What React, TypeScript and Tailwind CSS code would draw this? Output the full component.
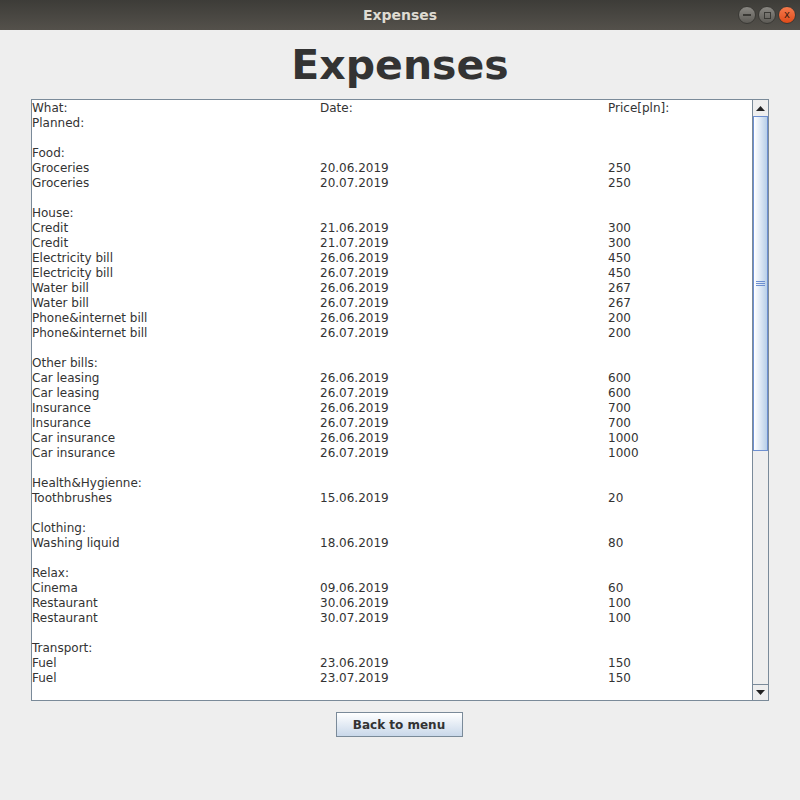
const rows: [string, string, string][] = [
  ['What:', 'Date:', 'Price[pln]:'],
  ['Planned:', '', ''],
  ['', '', ''],
  ['Food:', '', ''],
  ['Groceries', '20.06.2019', '250'],
  ['Groceries', '20.07.2019', '250'],
  ['', '', ''],
  ['House:', '', ''],
  ['Credit', '21.06.2019', '300'],
  ['Credit', '21.07.2019', '300'],
  ['Electricity bill', '26.06.2019', '450'],
  ['Electricity bill', '26.07.2019', '450'],
  ['Water bill', '26.06.2019', '267'],
  ['Water bill', '26.07.2019', '267'],
  ['Phone&internet bill', '26.06.2019', '200'],
  ['Phone&internet bill', '26.07.2019', '200'],
  ['', '', ''],
  ['Other bills:', '', ''],
  ['Car leasing', '26.06.2019', '600'],
  ['Car leasing', '26.07.2019', '600'],
  ['Insurance', '26.06.2019', '700'],
  ['Insurance', '26.07.2019', '700'],
  ['Car insurance', '26.06.2019', '1000'],
  ['Car insurance', '26.07.2019', '1000'],
  ['', '', ''],
  ['Health&Hygienne:', '', ''],
  ['Toothbrushes', '15.06.2019', '20'],
  ['', '', ''],
  ['Clothing:', '', ''],
  ['Washing liquid', '18.06.2019', '80'],
  ['', '', ''],
  ['Relax:', '', ''],
  ['Cinema', '09.06.2019', '60'],
  ['Restaurant', '30.06.2019', '100'],
  ['Restaurant', '30.07.2019', '100'],
  ['', '', ''],
  ['Transport:', '', ''],
  ['Fuel', '23.06.2019', '150'],
  ['Fuel', '23.07.2019', '150'],
]

function TitleBar() {
  return (
    <div className="relative h-[30px] bg-gradient-to-b from-[#3d3c38] to-[#54514b] flex items-center justify-center">
      <span className="text-[14px] font-bold text-[#dfdbd2] font-['DejaVu_Sans',sans-serif]">Expenses</span>
      <div className="absolute right-[4px] top-[6px] flex gap-[2px]">
        <div className="w-[18px] h-[18px] rounded-full bg-gradient-to-b from-[#8a8883] to-[#5d5b56] border border-[#3a3935] flex items-center justify-center">
          <div className="w-[8px] h-[1.5px] bg-[#3a3935]" />
        </div>
        <div className="w-[18px] h-[18px] rounded-full bg-gradient-to-b from-[#8a8883] to-[#5d5b56] border border-[#3a3935] flex items-center justify-center">
          <div className="w-[7px] h-[7px] border border-[#3a3935]" />
        </div>
        <div className="w-[18px] h-[18px] rounded-full bg-gradient-to-b from-[#f57a4c] to-[#df4a16] border border-[#3a3935] flex items-center justify-center text-[10px] leading-none text-[#3a2010] font-['DejaVu_Sans',sans-serif]">
          x
        </div>
      </div>
    </div>
  )
}

function ScrollBar() {
  return (
    <div className="w-[16px] flex flex-col border-l border-[#7a8a99] bg-[#eeeeee]">
      <div className="h-[16px] flex items-center justify-center bg-[#eeeeee]">
        <svg width="9" height="5" viewBox="0 0 9 5"><path d="M4.5 0 L9 5 L0 5 Z" fill="#222" /></svg>
      </div>
      <div className="h-[335px] border border-[#6d8fd0] bg-gradient-to-r from-[#ffffff] via-[#dde8f5] to-[#b8cfe8] flex items-center justify-center">
        <div className="flex flex-col gap-[1px]">
          <div className="w-[9px] h-[1px] bg-[#6d8fd0]" />
          <div className="w-[9px] h-[1px] bg-[#6d8fd0]" />
          <div className="w-[9px] h-[1px] bg-[#6d8fd0]" />
        </div>
      </div>
      <div className="flex-1" />
      <div className="h-[16px] flex items-center justify-center border-t border-[#7a8a99]">
        <svg width="9" height="5" viewBox="0 0 9 5"><path d="M0 0 L9 0 L4.5 5 Z" fill="#222" /></svg>
      </div>
    </div>
  )
}

export default function App() {
  return (
    <div className="w-[800px] h-[800px] bg-[#eeeeee] flex flex-col font-['DejaVu_Sans',sans-serif] text-[#333333]">
      <TitleBar />
      <div className="h-[69px] flex items-center justify-center">
        <h1 className="text-[41px] font-bold leading-none text-[#333333] mt-[2px]">Expenses</h1>
      </div>
      <div className="mx-[31px] h-[602px] border border-[#7a8a99] bg-white flex">
        <div className="flex-1 pt-[1px]">
          {rows.map((r, i) => (
            <div key={i} className="grid grid-cols-[288px_288px_1fr] h-[15px] text-[12px] leading-[15px] whitespace-pre">
              <span>{r[0]}</span>
              <span>{r[1]}</span>
              <span>{r[2]}</span>
            </div>
          ))}
        </div>
        <ScrollBar />
      </div>
      <div className="flex justify-center mt-[11px]">
        <button className="w-[127px] h-[25px] mr-[2px] border border-[#7a8a99] bg-gradient-to-b from-[#ffffff] to-[#c9d8ea] text-[12px] font-bold text-[#333333]">
          Back to menu
        </button>
      </div>
    </div>
  )
}
